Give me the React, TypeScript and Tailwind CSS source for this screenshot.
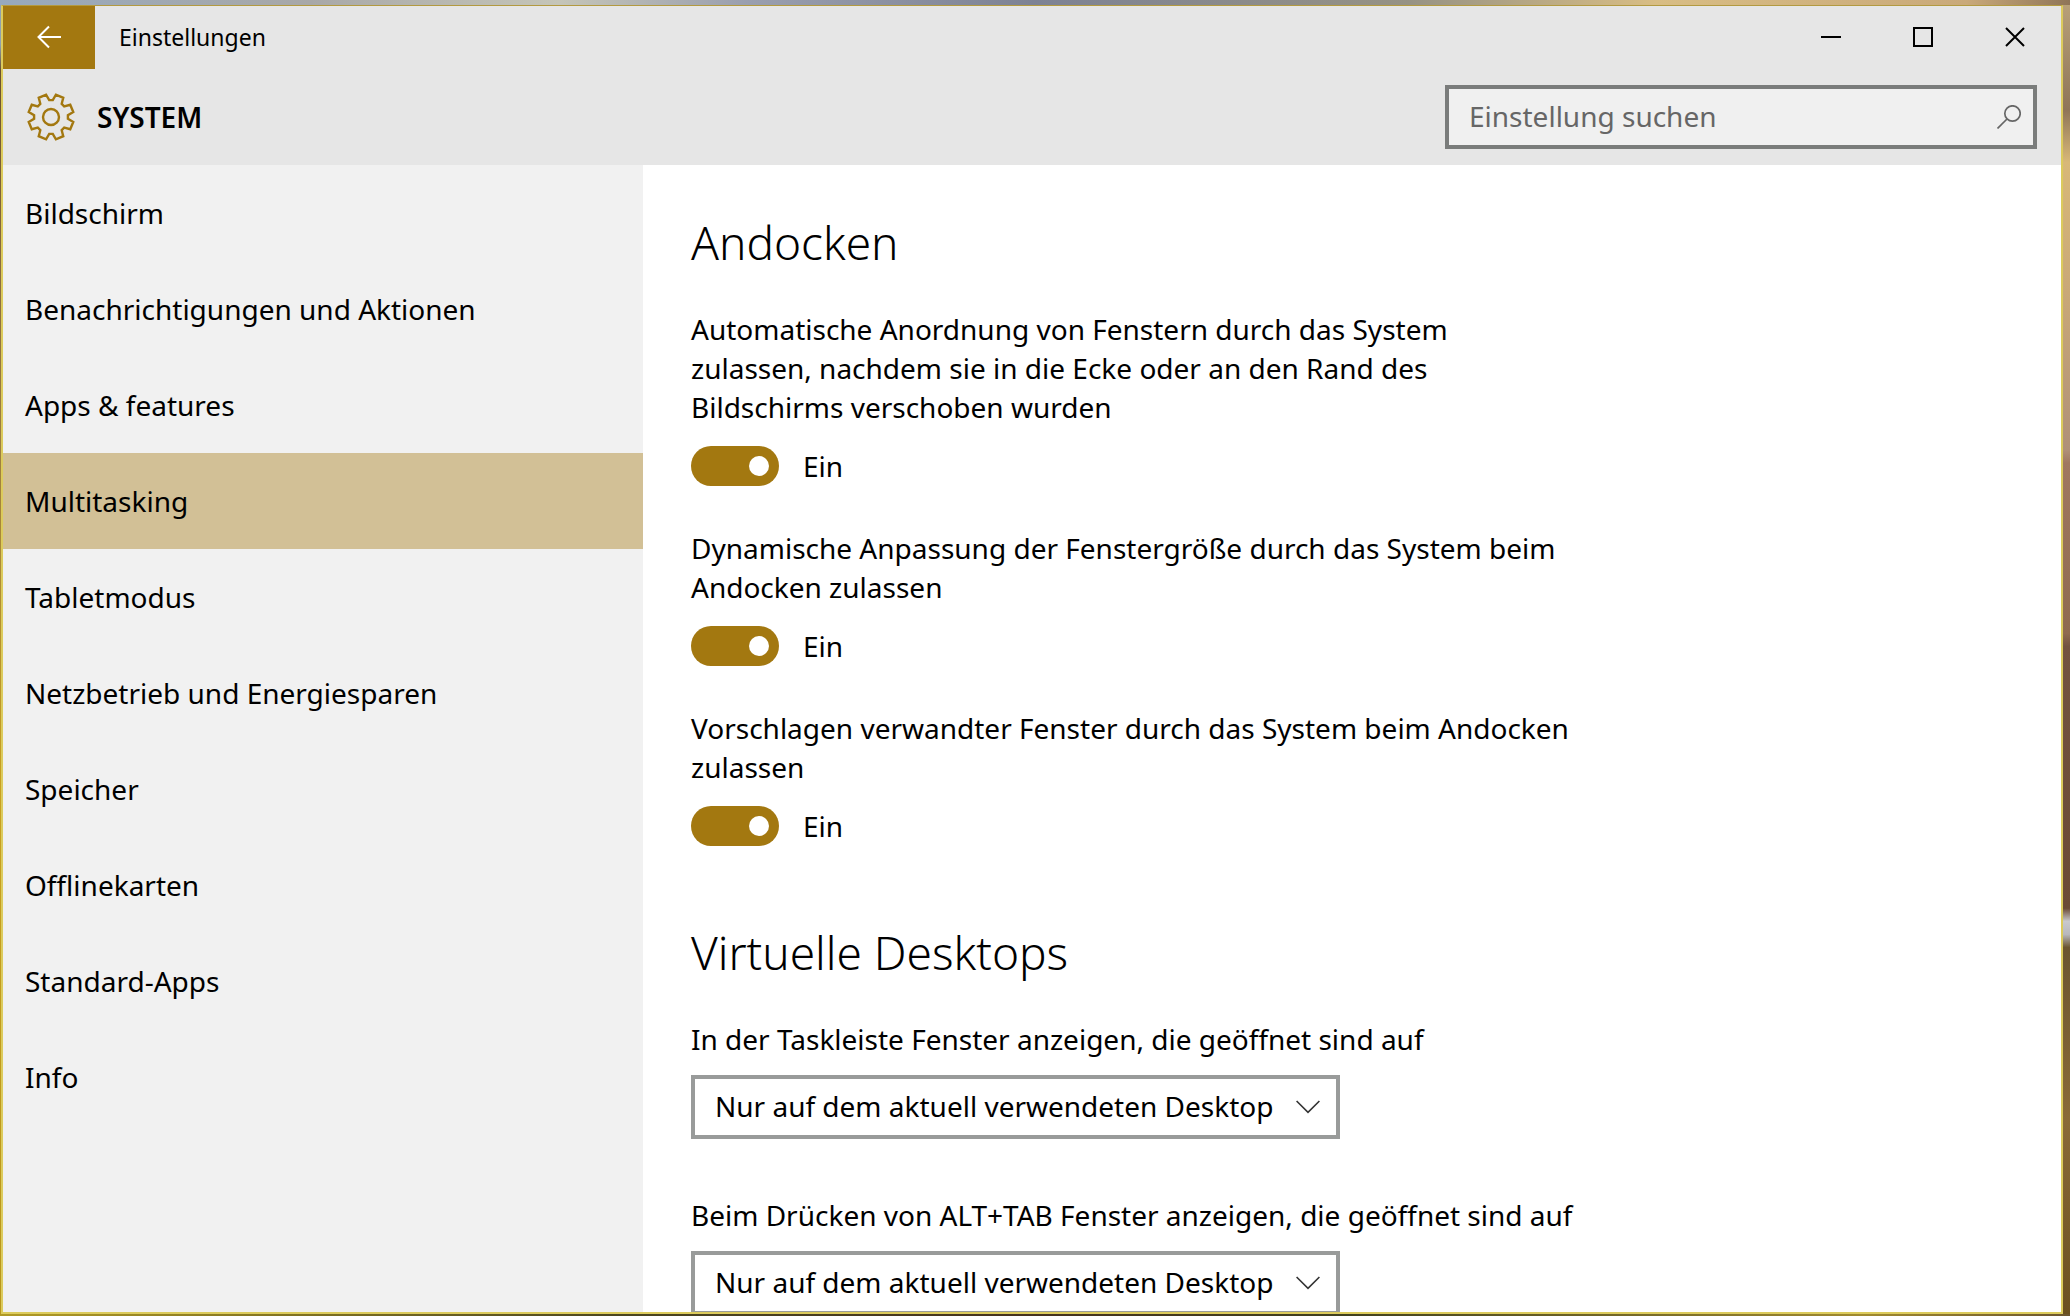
import React, { useState } from 'react';

const navItems = [
  'Bildschirm',
  'Benachrichtigungen und Aktionen',
  'Apps & features',
  'Multitasking',
  'Tabletmodus',
  'Netzbetrieb und Energiesparen',
  'Speicher',
  'Offlinekarten',
  'Standard-Apps',
  'Info',
];

const snapOptions = [
  {
    id: 'arrange',
    label:
      'Automatische Anordnung von Fenstern durch das System zulassen, nachdem sie in die Ecke oder an den Rand des Bildschirms verschoben wurden',
  },
  {
    id: 'resize',
    label: 'Dynamische Anpassung der Fenstergröße durch das System beim Andocken zulassen',
  },
  {
    id: 'suggest',
    label: 'Vorschlagen verwandter Fenster durch das System beim Andocken zulassen',
  },
];

const desktopOptions = [
  { id: 'taskbar', label: 'In der Taskleiste Fenster anzeigen, die geöffnet sind auf' },
  { id: 'alttab', label: 'Beim Drücken von ALT+TAB Fenster anzeigen, die geöffnet sind auf' },
];

// Outline of the eight-toothed gear, drawn around (0, 0)
const gearPath = () => {
  const points: string[] = [];
  for (let i = 0; i < 8; i++) {
    const mid = i * 45 + 22.5;
    [
      [-16.5, 17],
      [-10, 22.8],
      [10, 22.8],
      [16.5, 17],
    ].forEach(([offset, radius]) => {
      const a = ((mid + offset) * Math.PI) / 180;
      points.push(`${(radius * Math.cos(a)).toFixed(2)} ${(radius * Math.sin(a)).toFixed(2)}`);
    });
  }
  return `M${points.join('L')}Z`;
};

const GearIcon: React.FC = () => (
  <svg className="h-12 w-12" viewBox="-24 -24 48 48" fill="none" stroke="#a37810" strokeWidth="2.4">
    <path d={gearPath()} />
    <circle r="8" />
  </svg>
);

const SectionTitle: React.FC<{ children: React.ReactNode }> = ({ children }) => (
  <h2 className="text-[46px] leading-[60px] font-light">{children}</h2>
);

const Toggle: React.FC<{ id: string; label: string }> = ({ id, label }) => {
  const [on, setOn] = useState(true);

  return (
    <div>
      <label htmlFor={id} className="block">
        {label}
      </label>
      <div className="mt-[19px] flex items-center gap-6">
        <input
          id={id}
          type="checkbox"
          role="switch"
          checked={on}
          onChange={(e) => setOn(e.target.checked)}
          className="h-10 w-22 appearance-none rounded-full bg-[#999] p-[10px] before:block before:size-5 before:rounded-full before:bg-white checked:bg-[#a37810] checked:before:ml-12"
        />
        <span>{on ? 'Ein' : 'Aus'}</span>
      </div>
    </div>
  );
};

const Dropdown: React.FC<{ id: string; label: string }> = ({ id, label }) => (
  <div>
    <label htmlFor={id} className="block">
      {label}
    </label>
    <div className="mt-4 grid w-fit items-center">
      <select
        id={id}
        className="col-start-1 row-start-1 h-16 appearance-none border-4 border-[#999b9a] bg-white pr-[62px] pb-[2px] pl-5"
      >
        <option>Nur auf dem aktuell verwendeten Desktop</option>
        <option>Auf allen Desktops</option>
      </select>
      <svg
        className="pointer-events-none col-start-1 row-start-1 mr-5 h-[14px] w-6 justify-self-end"
        viewBox="0 0 24 14"
        fill="none"
        stroke="#333"
        strokeWidth="1.6"
      >
        <path d="M0.6 1L12 12.4L23.4 1" />
      </svg>
    </div>
  </div>
);

// Desktop wallpaper, visible as a thin strip on each side of the window
const Desktop: React.FC<{ children: React.ReactNode }> = ({ children }) => (
  <div className="flex h-screen flex-col overflow-hidden">
    <div className="h-[5px] shrink-0 bg-[linear-gradient(90deg,#97a9bd,#a8a8a8_15%,#c5c5b8_27%,#9a9faf_36%,#7d8294_50%,#969284_68%,#d8bd84_80%,#c9a97a_95%,#8f7558)]" />
    <div className="flex min-h-0 flex-1">
      <div className="w-px shrink-0 bg-[linear-gradient(180deg,#8f9fb0_3%,#6b5030_5%,#8a6a40_20%,#a08040_35%,#c9a020_60%,#b8951c)]" />
      {children}
      <div className="w-[7px] shrink-0 bg-[linear-gradient(180deg,#b8a078,#8f7558_8%,#d8b878_12%,#c9a878_22%,#b09078_34%,#a07860_35%,#8f6a50_48%,#735340_49%,#6b4a35_69%,#c9c9cc_70%,#b8b8bc_71%,#6b5530_72%,#8a6a38_85%,#6b5020)]" />
    </div>
    <div className="h-[2px] shrink-0 bg-[linear-gradient(90deg,#b09a25,#4a4520_30%,#45321f_50%,#40401f_65%,#a08a30_90%,#6b5530)]" />
  </div>
);

const App: React.FC = () => {
  const [active, setActive] = useState('Multitasking');

  return (
    <Desktop>
      <div className="flex min-w-0 flex-1 flex-col border-2 border-t border-[#dccb5c] border-t-[#b39a40] bg-white font-['Noto_Sans','Open_Sans',sans-serif] text-[28px] leading-[39px] text-black">
        <header className="shrink-0 bg-[#e6e6e6]">
          <div className="flex h-[63px] items-center">
            <button
              aria-label="Zurück"
              className="flex h-full w-[92px] items-center justify-center bg-[#a37810] pb-[2px]"
            >
              <svg className="h-6 w-6" viewBox="0 0 24 24" fill="none" stroke="white" strokeWidth="2">
                <path d="M24 12H1.5M12 1.5L1.5 12L12 22.5" />
              </svg>
            </button>
            <h1 className="ml-6 text-[23px]">Einstellungen</h1>
            <div className="ml-auto flex h-full">
              <button aria-label="Minimieren" className="flex w-[92px] items-center justify-center pb-[2px]">
                <svg className="size-5" viewBox="0 0 20 20" stroke="black" strokeWidth="2">
                  <path d="M0 10H20" />
                </svg>
              </button>
              <button aria-label="Maximieren" className="flex w-[92px] items-center justify-center pb-[2px]">
                <svg className="size-5" viewBox="0 0 20 20" fill="none" stroke="black" strokeWidth="2">
                  <path d="M1 1H19V19H1Z" />
                </svg>
              </button>
              <button aria-label="Schließen" className="flex w-[92px] items-center justify-center pb-[2px]">
                <svg className="size-5" viewBox="0 0 20 20" stroke="black" strokeWidth="2">
                  <path d="M1 1L19 19M19 1L1 19" />
                </svg>
              </button>
            </div>
          </div>
          <div className="flex h-24 items-center px-6">
            <GearIcon />
            <h2 className="ml-[22px] font-semibold">SYSTEM</h2>
            <label className="ml-auto flex h-16 w-[592px] items-center border-4 border-[#7a7c7b] bg-[#f0f0f0] pr-3 pl-5">
              <input
                type="search"
                aria-label="Einstellung suchen"
                placeholder="Einstellung suchen"
                className="min-w-0 flex-1 bg-transparent pb-[2px] outline-none placeholder:text-[#666]"
              />
              <svg className="h-6 w-6" viewBox="0 0 24 24" fill="none" stroke="#666" strokeWidth="1.7">
                <circle cx="15.5" cy="8.5" r="7.7" />
                <path d="M10 14L0.5 23.5" />
              </svg>
            </label>
          </div>
        </header>

        <div className="flex min-h-0 flex-1">
          <nav className="w-[640px] shrink-0 bg-[#f1f1f1]">
            {navItems.map((item) => (
              <a
                key={item}
                href="#"
                onClick={() => setActive(item)}
                className={`flex h-24 items-center px-[22px] ${item === active ? 'bg-[#d2c096]' : ''}`}
              >
                {item}
              </a>
            ))}
          </nav>

          <main className="min-w-0 flex-1 overflow-hidden px-12">
            <section className="mt-[47px]">
              <SectionTitle>Andocken</SectionTitle>
              <div className="mt-[38px] flex max-w-[880px] flex-col gap-[43px]">
                {snapOptions.map((option) => (
                  <Toggle key={option.id} {...option} />
                ))}
              </div>
            </section>

            <section className="mt-[76px]">
              <SectionTitle>Virtuelle Desktops</SectionTitle>
              <div className="mt-[38px] flex flex-col gap-[57px]">
                {desktopOptions.map((option) => (
                  <Dropdown key={option.id} {...option} />
                ))}
              </div>
            </section>
          </main>
        </div>
      </div>
    </Desktop>
  );
};

export default App;
